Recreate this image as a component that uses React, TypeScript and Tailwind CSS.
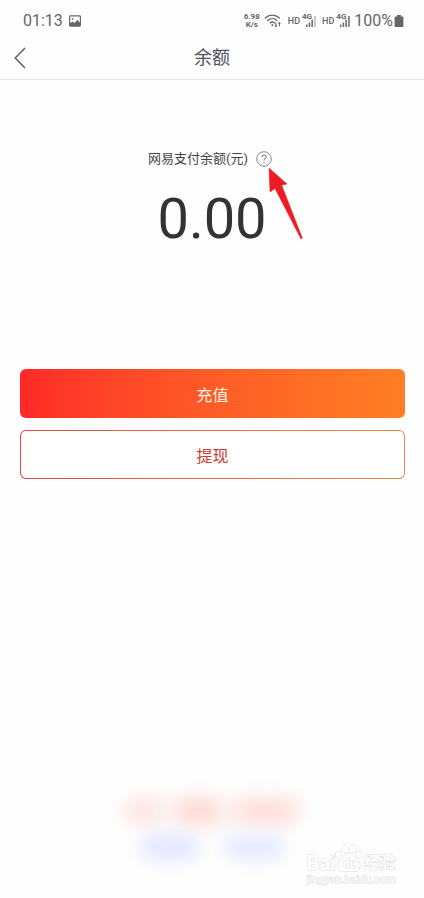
import React from "react";

function PictureIcon() {
  return (
    <svg className="ml-1.5 h-3 w-3" viewBox="0 0 12 12" aria-hidden="true">
      <rect x="0.6" y="0.9" width="10.8" height="10.2" rx="0.8" fill="none" stroke="#666" strokeWidth="1.2" />
      <path d="M1 11V8.3L3.4 6.6l1.8 1.5L8.6 5 11 7.8V11z" fill="#666" />
      <circle cx="3.6" cy="3.8" r="0.9" fill="#666" />
    </svg>
  );
}

function WifiIcon() {
  return (
    <svg className="ml-1 h-4 w-5" viewBox="0 0 20 16" fill="none" stroke="#666" strokeLinecap="round" aria-hidden="true">
      <path d="M1.200 5C5.200 1.100 11.400 1.100 15.400 5" strokeWidth="1.300" />
      <path d="M3.700 7.500c2.700-2.500 6.500-2.500 9.200 0" strokeWidth="1.300" />
      <path d="M6.100 9.900c1.300-1.100 3.100-1.100 4.400 0" strokeWidth="1.300" />
      <circle cx="8.300" cy="12" r="0.900" fill="#666" stroke="none" />
      <path d="M11.900 10v3.400" strokeWidth="1" />
      <path d="M10.400 12.200h3l-1.500 2zM13.900 11h3l-1.500-2z" fill="#666" stroke="none" />
      <path d="M15.400 10v3" strokeWidth="1" />
    </svg>
  );
}

function Signal({ full }: { full: boolean }) {
  return (
    <>
      <span className="ml-1 text-[9px] leading-3 font-medium">HD</span>
      <span className="relative ml-0.5 block h-4 w-4">
        <svg className="h-4 w-4" viewBox="0 0 16 16" aria-hidden="true">
          <path d="M4 11.500h1.500V14H4zM6.700 9.500h1.500V14H6.700zM9.400 6.500h1.500V14H9.400z" fill="#666" />
          <path d="M12.200 3h1.500v11h-1.500z" fill={full ? "#666" : "#b5b5b5"} />
        </svg>
        <span className="absolute top-0 left-0 text-[8px] leading-[8px] font-bold">4G</span>
      </span>
    </>
  );
}

function StatusBar() {
  return (
    <div className="flex h-[42px] items-center justify-between pr-5 pl-[23px] text-[#666]">
      <div className="flex items-center">
        <span className="text-base">01:13</span>
        <PictureIcon />
      </div>
      <div className="flex items-center">
        <span className="text-center text-[8px] leading-[8px] font-bold">
          6.98
          <br />
          K/s
        </span>
        <WifiIcon />
        <Signal full={false} />
        <Signal full />
        <span className="ml-0.5 text-base">100%</span>
        <svg className="ml-px h-3 w-2.5" viewBox="0 0 10 12" aria-hidden="true">
          <path d="M3 0h4v1.400h1.600q.8 0 .8.800v9q0 .8-.8.800H1.400q-.8 0-.8-.8v-9q0-.8.800-.8H3z" fill="#666" />
        </svg>
      </div>
    </div>
  );
}

function Header() {
  return (
    <header className="grid h-[38px] grid-cols-[40px_1fr_40px] items-center border-b border-[#e6e6e8] pb-1.5">
      <button type="button" aria-label="返回" className="flex h-8 items-center pl-3.5">
        <svg className="h-[22px] w-3" viewBox="0 0 12 22" fill="none" stroke="#5a5f69" strokeWidth="1.500" aria-hidden="true">
          <path d="M11 1 1.200 11 11 21" />
        </svg>
      </button>
      <h1 className="text-center text-lg leading-6 text-[#4c515c]">余额</h1>
    </header>
  );
}

function Pointer() {
  return (
    <svg className="pointer-events-none absolute top-4 left-3 h-[74px] w-9" viewBox="0 0 36 74" aria-hidden="true">
      <path d="M1 1 19 17 13.600 18 34.300 71 33 72 7 21.500 2 25z" fill="#ed1c24" stroke="#d9202a" strokeWidth="0.500" />
    </svg>
  );
}

function Balance() {
  return (
    <section className="flex flex-col items-center pt-[70px]">
      <div className="flex h-[18px] items-center gap-2 pr-1 text-[13px] text-[#444]">
        <span>网易支付余额(元)</span>
        <span className="relative block h-4 w-4">
          <button type="button" aria-label="余额说明" className="block h-4 w-4">
            <svg className="h-4 w-4" viewBox="0 0 16 16" fill="none" stroke="#8e8a80" aria-hidden="true">
              <circle cx="8" cy="8" r="7.300" />
              <path d="M5.900 6.300c0-1.400 1-2.200 2.200-2.200s2.100.8 2.100 2c0 1.500-2.200 1.700-2.200 3.400" strokeWidth="1.100" />
              <path d="M8 10.700v1.300" strokeWidth="1.200" />
            </svg>
          </button>
          <Pointer />
        </span>
      </div>
      <p className="mt-5 text-[56px] leading-[62px] text-[#333]">0.00</p>
    </section>
  );
}

function Actions() {
  return (
    <div className="mt-[119px] flex flex-col gap-3 pr-[19px] pl-5 text-base">
      <button type="button" className="h-[49px] rounded-md bg-linear-to-r from-[#ff2828] to-[#ff7e24] pt-1 text-[#fff3e8]">
        充值
      </button>
      <button type="button" className="h-[49px] rounded-md bg-linear-to-r from-[#e0484a] to-[#e58a4c] p-px text-[#d0392f]">
        <span className="flex h-full items-center justify-center rounded-[5px] bg-white pt-1">提现</span>
      </button>
    </div>
  );
}

function Glow() {
  return (
    <div className="flex w-[180px] flex-col gap-3" aria-hidden="true">
      <div className="flex h-6 gap-3 pl-1 blur-[10px]">
        <div className="w-9 rounded-lg bg-[#fde0dc]" />
        <div className="w-12 rounded-lg bg-[#fdd4ce]" />
        <div className="w-16 rounded-lg bg-[#fddad5]" />
      </div>
      <div className="flex h-6 justify-center gap-7 blur-[9px]">
        <div className="w-14 rounded-lg bg-[#e1e5ff]" />
        <div className="w-14 rounded-lg bg-[#e4e8ff]" />
      </div>
    </div>
  );
}

function Watermark() {
  return (
    <div className="absolute right-7 bottom-3 flex flex-col gap-0.5 text-white [paint-order:stroke_fill] [-webkit-text-stroke:1px_#dcdcdc]">
      <div className="flex h-7 items-end">
        <span className="text-xl leading-[18px] font-bold">Bai</span>
        <span className="relative flex h-7 w-7 items-end justify-center">
          <svg className="absolute inset-0 h-7 w-7" viewBox="0 0 28 28" fill="#fff" stroke="#cfcfcf" aria-hidden="true">
            <ellipse cx="3.500" cy="10.500" rx="2.800" ry="3.600" />
            <ellipse cx="10" cy="4.500" rx="3" ry="4" />
            <ellipse cx="18" cy="4.500" rx="3" ry="4" />
            <ellipse cx="24.500" cy="10.500" rx="2.800" ry="3.600" />
            <path d="M14 9.500c3.500 0 5 3 8 5.500 4 3.500 4 10.500-1 12-2.500.7-11.500.7-14 0-5-1.500-5-8.500-1-12 3-2.500 4.500-5.500 8-5.500z" />
          </svg>
          <span className="relative text-xs leading-4 font-bold">du</span>
        </span>
        <span className="text-base leading-[18px] font-bold">经验</span>
      </div>
      <span className="text-[11px] leading-3">jingyan.baidu.com</span>
    </div>
  );
}

export default function App() {
  return (
    <main className="relative flex min-h-screen flex-col bg-[#fefefe] font-[Roboto,'Noto_Sans_CJK_SC',sans-serif]">
      <StatusBar />
      <Header />
      <Balance />
      <Actions />
      <div className="mt-auto flex justify-center pb-[39px]">
        <Glow />
      </div>
      <Watermark />
    </main>
  );
}
